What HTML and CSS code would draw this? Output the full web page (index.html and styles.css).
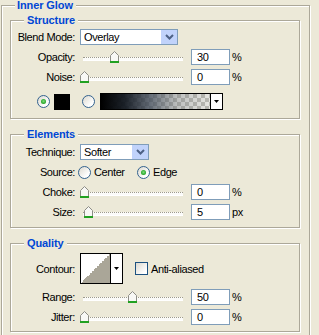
FILE: index.html
```html
<!DOCTYPE html>
<html lang="en">
<head>
    <meta charset="UTF-8">
    <meta name="viewport" content="width=device-width, initial-scale=1.0">
    <title>Inner Glow</title>
    <link rel="stylesheet" href="styles.css">
</head>
<body>

<div class="group outer">
    <div class="legend">Inner Glow</div>

    <div class="group sub structure">
        <div class="legend">Structure</div>
        <div class="row first">
            <span class="lbl">Blend Mode:</span>
            <div class="select blend">
                <span class="select-text">Overlay</span>
                <span class="select-btn"><svg width="9" height="6" viewBox="0 0 9 6"><polyline points="1,1 4.5,4.5 8,1" fill="none" stroke="#4d6185" stroke-width="2"/></svg></span>
            </div>
        </div>
        <div class="row">
            <span class="lbl">Opacity:</span>
            <div class="slider">
                <div class="track"></div>
                <svg class="thumb" style="left:30px" width="9" height="12" viewBox="0 0 9 12"><path d="M0.5 4.5 L4.5 0.5 L8.5 4.5 V11.5 H0.5 Z" fill="#f8f8f5" stroke="#8d8d86"/><rect x="0" y="10" width="9" height="2" fill="#21a121"/></svg>
            </div>
            <span class="num">30</span>
            <span class="unit">%</span>
        </div>
        <div class="row">
            <span class="lbl">Noise:</span>
            <div class="slider">
                <div class="track"></div>
                <svg class="thumb" style="left:0px" width="9" height="12" viewBox="0 0 9 12"><path d="M0.5 4.5 L4.5 0.5 L8.5 4.5 V11.5 H0.5 Z" fill="#f8f8f5" stroke="#8d8d86"/><rect x="0" y="10" width="9" height="2" fill="#21a121"/></svg>
            </div>
            <span class="num">0</span>
            <span class="unit">%</span>
        </div>
        <div class="row colors">
            <span class="radio checked"></span>
            <span class="swatch"></span>
            <span class="radio second"></span>
            <div class="gradient">
                <span class="grad-fill"></span>
                <span class="drop"><svg width="5" height="3" viewBox="0 0 5 3"><polygon points="0,0 5,0 2.5,3" fill="#000"/></svg></span>
            </div>
        </div>
    </div>

    <div class="group sub elements">
        <div class="legend">Elements</div>
        <div class="row first">
            <span class="lbl">Technique:</span>
            <div class="select technique">
                <span class="select-text">Softer</span>
                <span class="select-btn"><svg width="9" height="6" viewBox="0 0 9 6"><polyline points="1,1 4.5,4.5 8,1" fill="none" stroke="#4d6185" stroke-width="2"/></svg></span>
            </div>
        </div>
        <div class="row">
            <span class="lbl">Source:</span>
            <span class="opt"><span class="radio"></span>Center</span>
            <span class="opt"><span class="radio checked"></span>Edge</span>
        </div>
        <div class="row">
            <span class="lbl">Choke:</span>
            <div class="slider">
                <div class="track"></div>
                <svg class="thumb" style="left:0px" width="9" height="12" viewBox="0 0 9 12"><path d="M0.5 4.5 L4.5 0.5 L8.5 4.5 V11.5 H0.5 Z" fill="#f8f8f5" stroke="#8d8d86"/><rect x="0" y="10" width="9" height="2" fill="#21a121"/></svg>
            </div>
            <span class="num">0</span>
            <span class="unit">%</span>
        </div>
        <div class="row">
            <span class="lbl">Size:</span>
            <div class="slider">
                <div class="track"></div>
                <svg class="thumb" style="left:4px" width="9" height="12" viewBox="0 0 9 12"><path d="M0.5 4.5 L4.5 0.5 L8.5 4.5 V11.5 H0.5 Z" fill="#f8f8f5" stroke="#8d8d86"/><rect x="0" y="10" width="9" height="2" fill="#21a121"/></svg>
            </div>
            <span class="num">5</span>
            <span class="unit">px</span>
        </div>
    </div>

    <div class="group sub quality">
        <div class="legend">Quality</div>
        <div class="row first contour-row">
            <span class="lbl">Contour:</span>
            <div class="contour">
                <span class="curve"></span>
                <span class="drop"><svg width="5" height="3" viewBox="0 0 5 3"><polygon points="0,0 5,0 2.5,3" fill="#000"/></svg></span>
            </div>
            <span class="check"></span>
            <span class="check-text">Anti-aliased</span>
        </div>
        <div class="row range">
            <span class="lbl">Range:</span>
            <div class="slider">
                <div class="track"></div>
                <svg class="thumb" style="left:48px" width="9" height="12" viewBox="0 0 9 12"><path d="M0.5 4.5 L4.5 0.5 L8.5 4.5 V11.5 H0.5 Z" fill="#f8f8f5" stroke="#8d8d86"/><rect x="0" y="10" width="9" height="2" fill="#21a121"/></svg>
            </div>
            <span class="num">50</span>
            <span class="unit">%</span>
        </div>
        <div class="row">
            <span class="lbl">Jitter:</span>
            <div class="slider">
                <div class="track"></div>
                <svg class="thumb" style="left:0px" width="9" height="12" viewBox="0 0 9 12"><path d="M0.5 4.5 L4.5 0.5 L8.5 4.5 V11.5 H0.5 Z" fill="#f8f8f5" stroke="#8d8d86"/><rect x="0" y="10" width="9" height="2" fill="#21a121"/></svg>
            </div>
            <span class="num">0</span>
            <span class="unit">%</span>
        </div>
    </div>
</div>

</body>
</html>
```

FILE: styles.css
```css
html, body {
    overflow: hidden;
}
body {
    margin: 0;
    background-color: #ece9d8;
    font-family: "Liberation Sans", Arial, sans-serif;
    font-size: 11px;
    letter-spacing: -0.4px;
    color: #000;
}
.group {
    border: 1px solid #aca899;
    box-shadow: 1px 1px 0 #fff, inset 1px 1px 0 #fff;
}
.legend {
    display: table;
    margin: -7px 0 0 13px;
    padding: 0 3px 0 3px;
    line-height: 12px;
    background-color: #ece9d8;
    color: #0046d5;
    font-weight: bold;
    letter-spacing: -0.1px;
}
.outer {
    width: 309px;
    box-sizing: border-box;
    margin: 5px 0 0 1px;
    padding: 0 9px 10px 8px;
}
.outer > .legend {
    margin-left: 5px;
    padding-left: 2px;
}
.structure {
    margin-top: 9px;
    padding-bottom: 8px;
}
.elements {
    margin-top: 15px;
    padding-bottom: 7px;
}
.quality {
    margin-top: 15px;
    padding-bottom: 6px;
}
.row {
    display: flex;
    align-items: center;
    height: 16px;
    margin-top: 4px;
}
.row.first {
    margin-top: 3px;
}
.elements .row.first,
.quality .row.first {
    margin-top: 4px;
}
.lbl {
    flex: none;
    width: 64px;
    margin-right: 5px;
    text-align: right;
}
.select {
    display: flex;
    box-sizing: border-box;
    height: 16px;
    border: 1px solid #7f9db9;
    background-color: #fff;
}
.select.blend {
    width: 98px;
}
.select.technique {
    width: 69px;
}
.select-text {
    flex: 1;
    padding-left: 3px;
    line-height: 14px;
}
.select-btn {
    display: flex;
    align-items: center;
    justify-content: center;
    width: 16px;
    background-color: #c1d3fb;
}
.slider {
    position: relative;
    flex: none;
    width: 111px;
    height: 16px;
}
.track {
    width: 100px;
    height: 2px;
    margin: 8px 0 0 3px;
    border-top: 1px dotted #9e9b8c;
    border-bottom: 1px solid #fff;
    background-color: #fbfbf9;
}
.thumb {
    position: absolute;
    top: 2px;
}
.num {
    box-sizing: border-box;
    width: 39px;
    height: 16px;
    padding-left: 5px;
    border: 1px solid #7f9db9;
    background-color: #fff;
    line-height: 14px;
}
.unit {
    margin-left: 2px;
}
.radio {
    position: relative;
    flex: none;
    box-sizing: border-box;
    width: 13px;
    height: 13px;
    border: 1px solid #33628f;
    border-radius: 50%;
    background: linear-gradient(135deg, #dcd9cf, #fff 75%);
}
.radio.checked::after {
    content: "";
    position: absolute;
    left: 3px;
    top: 3px;
    width: 5px;
    height: 5px;
    border-radius: 50%;
    background: radial-gradient(circle at 50% 45%, #7ee07e, #21a121 70%);
}
.colors {
    height: 17px;
    margin-top: 8px;
    padding-left: 26px;
}
.swatch {
    width: 16px;
    height: 16px;
    margin-left: 4px;
    background-color: #000;
}
.radio.second {
    margin-left: 12px;
}
.gradient {
    display: flex;
    box-sizing: border-box;
    width: 123px;
    height: 17px;
    margin-left: 5px;
    border: 1px solid #000;
}
.grad-fill {
    width: 109px;
    border-right: 1px solid #000;
    background:
        linear-gradient(to right, #000 0%, rgba(18, 24, 32, 0.95) 22%, rgba(68, 78, 92, 0.8) 45%, rgba(120, 125, 128, 0.4) 70%, rgba(180, 180, 178, 0.1) 100%),
        repeating-conic-gradient(#b9b9b3 0 25%, #ecece8 0 50%) 0 0 / 8px 8px;
}
.drop {
    display: flex;
    flex: 1;
    align-items: center;
    justify-content: center;
    background-color: #fff;
}
.opt {
    display: flex;
    align-items: center;
    gap: 3px;
    width: 61px;
    margin-left: -2px;
}
.contour-row {
    height: 31px;
}
.contour {
    display: flex;
    box-sizing: border-box;
    width: 43px;
    height: 31px;
    border: 1px solid #000;
}
.curve {
    width: 29px;
    border-right: 1px solid #000;
    background: linear-gradient(to top left, #aaa698 50%, #fff 50%);
}
.check {
    box-sizing: border-box;
    width: 13px;
    height: 13px;
    margin-left: 12px;
    border: 1px solid #1c5180;
    background: linear-gradient(135deg, #dcd9cf, #fff 80%);
}
.check-text {
    margin-left: 3px;
}
.row.range {
    margin-top: 5px;
}
```
